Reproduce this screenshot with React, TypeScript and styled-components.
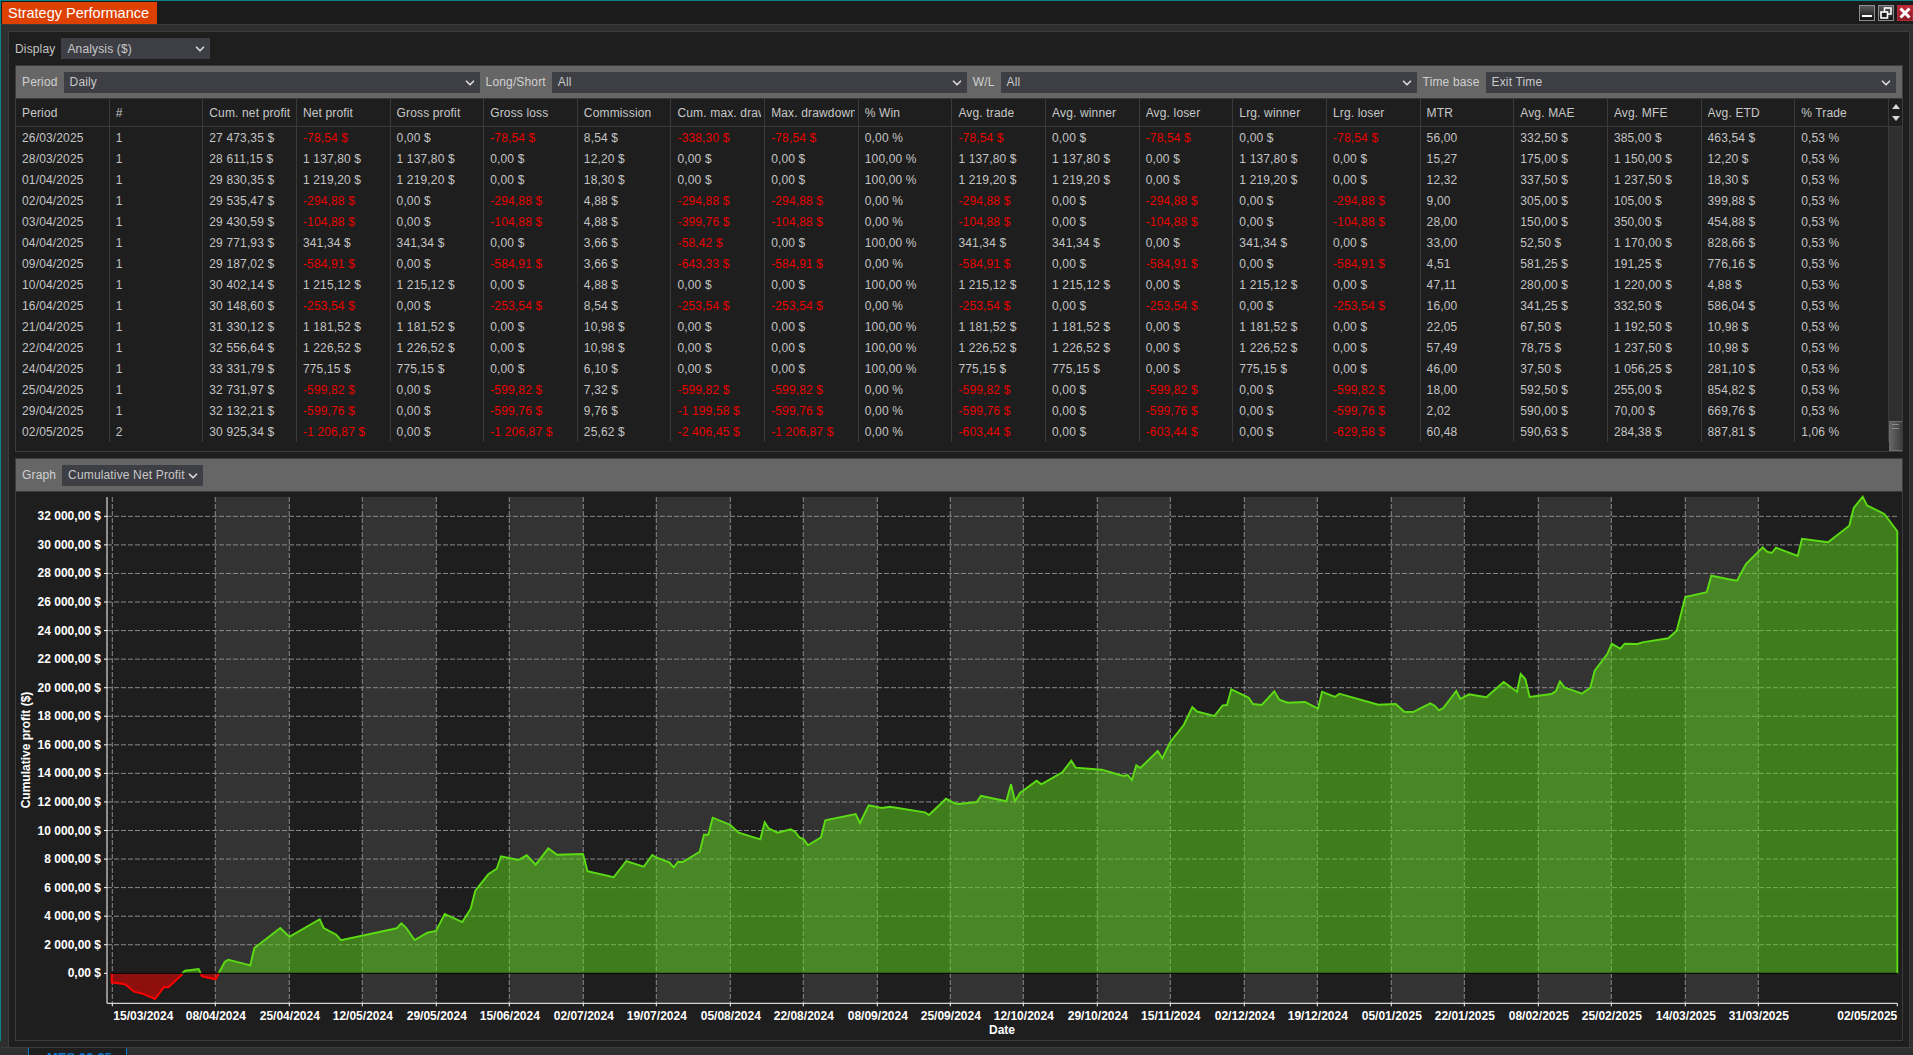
import React from 'react';
import styled, { createGlobalStyle } from 'styled-components';
import { ChevronDown } from 'lucide-react';

const COLUMNS = [
  'Period', '#', 'Cum. net profit', 'Net profit', 'Gross profit', 'Gross loss', 'Commission',
  'Cum. max. drawdown', 'Max. drawdown', '% Win', 'Avg. trade', 'Avg. winner', 'Avg. loser',
  'Lrg. winner', 'Lrg. loser', 'MTR', 'Avg. MAE', 'Avg. MFE', 'Avg. ETD', '% Trade',
];

// every value is kept as shown, a leading minus paints the cell red
const ROWS = [
  '26/03/2025|1|27 473,35 $|-78,54 $|0,00 $|-78,54 $|8,54 $|-338,30 $|-78,54 $|0,00 %|-78,54 $|0,00 $|-78,54 $|0,00 $|-78,54 $|56,00|332,50 $|385,00 $|463,54 $|0,53 %',
  '28/03/2025|1|28 611,15 $|1 137,80 $|1 137,80 $|0,00 $|12,20 $|0,00 $|0,00 $|100,00 %|1 137,80 $|1 137,80 $|0,00 $|1 137,80 $|0,00 $|15,27|175,00 $|1 150,00 $|12,20 $|0,53 %',
  '01/04/2025|1|29 830,35 $|1 219,20 $|1 219,20 $|0,00 $|18,30 $|0,00 $|0,00 $|100,00 %|1 219,20 $|1 219,20 $|0,00 $|1 219,20 $|0,00 $|12,32|337,50 $|1 237,50 $|18,30 $|0,53 %',
  '02/04/2025|1|29 535,47 $|-294,88 $|0,00 $|-294,88 $|4,88 $|-294,88 $|-294,88 $|0,00 %|-294,88 $|0,00 $|-294,88 $|0,00 $|-294,88 $|9,00|305,00 $|105,00 $|399,88 $|0,53 %',
  '03/04/2025|1|29 430,59 $|-104,88 $|0,00 $|-104,88 $|4,88 $|-399,76 $|-104,88 $|0,00 %|-104,88 $|0,00 $|-104,88 $|0,00 $|-104,88 $|28,00|150,00 $|350,00 $|454,88 $|0,53 %',
  '04/04/2025|1|29 771,93 $|341,34 $|341,34 $|0,00 $|3,66 $|-58,42 $|0,00 $|100,00 %|341,34 $|341,34 $|0,00 $|341,34 $|0,00 $|33,00|52,50 $|1 170,00 $|828,66 $|0,53 %',
  '09/04/2025|1|29 187,02 $|-584,91 $|0,00 $|-584,91 $|3,66 $|-643,33 $|-584,91 $|0,00 %|-584,91 $|0,00 $|-584,91 $|0,00 $|-584,91 $|4,51|581,25 $|191,25 $|776,16 $|0,53 %',
  '10/04/2025|1|30 402,14 $|1 215,12 $|1 215,12 $|0,00 $|4,88 $|0,00 $|0,00 $|100,00 %|1 215,12 $|1 215,12 $|0,00 $|1 215,12 $|0,00 $|47,11|280,00 $|1 220,00 $|4,88 $|0,53 %',
  '16/04/2025|1|30 148,60 $|-253,54 $|0,00 $|-253,54 $|8,54 $|-253,54 $|-253,54 $|0,00 %|-253,54 $|0,00 $|-253,54 $|0,00 $|-253,54 $|16,00|341,25 $|332,50 $|586,04 $|0,53 %',
  '21/04/2025|1|31 330,12 $|1 181,52 $|1 181,52 $|0,00 $|10,98 $|0,00 $|0,00 $|100,00 %|1 181,52 $|1 181,52 $|0,00 $|1 181,52 $|0,00 $|22,05|67,50 $|1 192,50 $|10,98 $|0,53 %',
  '22/04/2025|1|32 556,64 $|1 226,52 $|1 226,52 $|0,00 $|10,98 $|0,00 $|0,00 $|100,00 %|1 226,52 $|1 226,52 $|0,00 $|1 226,52 $|0,00 $|57,49|78,75 $|1 237,50 $|10,98 $|0,53 %',
  '24/04/2025|1|33 331,79 $|775,15 $|775,15 $|0,00 $|6,10 $|0,00 $|0,00 $|100,00 %|775,15 $|775,15 $|0,00 $|775,15 $|0,00 $|46,00|37,50 $|1 056,25 $|281,10 $|0,53 %',
  '25/04/2025|1|32 731,97 $|-599,82 $|0,00 $|-599,82 $|7,32 $|-599,82 $|-599,82 $|0,00 %|-599,82 $|0,00 $|-599,82 $|0,00 $|-599,82 $|18,00|592,50 $|255,00 $|854,82 $|0,53 %',
  '29/04/2025|1|32 132,21 $|-599,76 $|0,00 $|-599,76 $|9,76 $|-1 199,58 $|-599,76 $|0,00 %|-599,76 $|0,00 $|-599,76 $|0,00 $|-599,76 $|2,02|590,00 $|70,00 $|669,76 $|0,53 %',
  '02/05/2025|2|30 925,34 $|-1 206,87 $|0,00 $|-1 206,87 $|25,62 $|-2 406,45 $|-1 206,87 $|0,00 %|-603,44 $|0,00 $|-603,44 $|0,00 $|-629,58 $|60,48|590,63 $|284,38 $|887,81 $|1,06 %',
].map((sRow) => sRow.split('|'));

// chart geometry, in page pixels
const ZERO_Y = 973.3;
const STEP_Y = 28.56;
const AXIS_X = 107;
const TOP_Y = 497;
const BOTTOM_Y = 1003.3;
const RIGHT_X = 1897.3;

const GRID_X = [
  112.3, 215.3, 289.3, 362.3, 436.3, 509.3, 583.3, 656.3, 730.3, 803.3, 877.3, 950.3,
  1023.3, 1097.3, 1170.3, 1244.3, 1317.3, 1391.3, 1464.3, 1538.3, 1611.3, 1685.3, 1758.3,
];

const DATES = [
  '15/03/2024', '08/04/2024', '25/04/2024', '12/05/2024', '29/05/2024', '15/06/2024', '02/07/2024',
  '19/07/2024', '05/08/2024', '22/08/2024', '08/09/2024', '25/09/2024', '12/10/2024', '29/10/2024',
  '15/11/2024', '02/12/2024', '19/12/2024', '05/01/2025', '22/01/2025', '08/02/2025', '25/02/2025',
  '14/03/2025', '31/03/2025',
];

const LOSS_A = '111.7,973.3 111.7,982.3 125,984.3 134,991.7 142.7,993.7 155,999 164,987 168.3,987.3 181.7,975 182.3,973.3';
const LOSS_B = '200.7,973.3 202,976.3 215.7,979.3 218.7,973.3';
const GAIN_A = '182.3,973.3 185,970.7 198.7,969 200.7,973.3';
const GAIN_B = `218.7,973.3 224.7,962 228.3,959.7 250.3,965.3 254.3,948 259.3,944.3 280.3,928 289.3,936.7
  319.7,919.3 323.7,928 336.3,934.7 341,940.3 396.7,928.3 401.3,923.3 405.7,927.3 414.7,940 427.3,932.7
  436,931 444.7,914 462.3,922 470.7,908.7 475.3,890.7 488.3,874.3 496.7,868.7 501,856.3 518.3,860
  526.7,855.3 535.7,864.7 548.3,848.3 557,854.7 583,854 587.5,871.3 613.7,877.3 626.3,861 643.7,866.7
  652.3,855 656.7,857.7 669.3,862.3 673.7,867.3 678,861.7 682.7,862 699.7,851.7 704,834.7 708.3,834.7
  712.7,817.7 730,824.7 738.7,832.7 760.3,839.3 764.7,822.3 769,828.7 777.7,832.7 790.7,829.3 795,831.7
  799.3,837.3 803.7,839.3 808,845.3 821,837.3 825.3,820.3 855.7,814 860,823 868.7,805.3 881.7,808
  890,806.7 925,812.3 929,815 946,798.7 954.7,803.3 959,804 976.7,802 981,795.7 1006.3,801.3 1011,784.3
  1015,801.3 1020,793 1036.7,780.7 1041.3,784.3 1062.3,772.3 1071.3,760.7 1075.7,767.7 1101.7,769.7
  1123.3,776 1127.7,775 1132,780 1136.3,765.3 1140.3,768 1157.7,751 1162.3,758.3 1170.3,742 1183.7,725
  1192.3,707 1196.7,711.3 1214.3,716 1222.7,705.3 1227,705 1231.3,689.3 1248.7,697.7 1253,704 1261.7,705
  1274.3,691.3 1279.3,699.7 1287.7,702.7 1305,702 1318,708.7 1322,691.7 1335,697 1339.3,693.7 1378.3,704.7
  1395.7,704 1404.3,711.7 1413,712 1430.3,703.3 1434.7,705.7 1439,710.3 1443.3,708 1456.3,691 1460.3,699
  1469,694.3 1486.3,697.3 1503.7,682 1517,691.7 1520.7,674 1525.3,679 1529.7,697 1551.3,694 1555.7,691.3
  1560,681.3 1564.3,687.3 1581.7,693.7 1590.3,687.7 1594.7,670.7 1607.3,654 1611.7,643.7 1620.3,648.7
  1624.7,643.7 1637.7,644 1642.3,642.3 1668.3,638.3 1676.7,630.7 1685.3,597 1706.7,592.3 1711.3,575.7
  1728.7,579.3 1737,580.7 1746,564 1762.7,547.3 1767,551.7 1771.7,553 1776,547.7 1797.7,556 1802,538.7
  1828,542.3 1849.3,525.7 1853.7,508 1862.7,496.7 1867,505.3 1884.3,514 1897.3,531.3 1897.3,973.3`;

const formatAxis = (iValue: number): string =>
  iValue === 0 ? '0,00 $' : `${String(iValue).replace(/(\d)(?=\d{3}$)/, '$1 ')},00 $`;

const Select = ({ sValue, iWidth }: { sValue: string; iWidth: number }) => (
  <SelectBox $iWidth={iWidth}>
    <span>{sValue}</span>
    <ChevronDown size={14} strokeWidth={3} color='#d8d8d8' />
  </SelectBox>
);

const Chart = () => {
  const arTicksY = Array.from({ length: 17 }, (_, i) => i * 2000);
  const arBands = GRID_X.slice(1).filter((_, i) => i % 2 === 0);

  return (
    <ChartSvg viewBox='16 492 1886 548'>
      {arBands.map((x, i) => (
        <rect key={x} x={x} y={TOP_Y} width={GRID_X[i * 2 + 2] - x} height={BOTTOM_Y - TOP_Y} fill='#333333' />
      ))}

      {arTicksY.map((iValue) => {
        const y = ZERO_Y - (iValue / 2000) * STEP_Y;
        return (
          <g key={iValue}>
            {iValue > 0 && <GridLine x1={AXIS_X} x2={RIGHT_X} y1={y} y2={y} />}
            <AxisLine x1={AXIS_X - 3} x2={AXIS_X} y1={y} y2={y} />
            <AxisText x={101} y={y + 4} textAnchor='end'>
              {formatAxis(iValue)}
            </AxisText>
          </g>
        );
      })}

      {GRID_X.map((x, i) => (
        <g key={x}>
          <GridLine x1={x} x2={x} y1={TOP_Y} y2={BOTTOM_Y} />
          <AxisLine x1={x} x2={x} y1={BOTTOM_Y} y2={BOTTOM_Y + 3} />
          <AxisText x={i === 0 ? x + 1 : x + 0.5} y={1020} textAnchor={i === 0 ? 'start' : 'middle'}>
            {DATES[i]}
          </AxisText>
        </g>
      ))}

      <polygon points={LOSS_A} fill='rgba(255, 0, 0, 0.5)' />
      <polygon points={LOSS_B} fill='rgba(255, 0, 0, 0.5)' />
      <polygon points={GAIN_A} fill='rgba(96, 220, 26, 0.5)' />
      <polygon points={GAIN_B} fill='rgba(96, 220, 26, 0.5)' />

      <polyline points={LOSS_A} fill='none' stroke='#ff0000' strokeWidth={2} />
      <polyline points={LOSS_B} fill='none' stroke='#ff0000' strokeWidth={2} />
      <polyline points={GAIN_A} fill='none' stroke='#5cdc14' strokeWidth={1.9} />
      <polyline points={GAIN_B} fill='none' stroke='#5cdc14' strokeWidth={1.9} />

      <line x1={AXIS_X + 4} x2={RIGHT_X} y1={ZERO_Y} y2={ZERO_Y} stroke='#000000' />

      <AxisLine x1={AXIS_X} x2={AXIS_X} y1={TOP_Y} y2={BOTTOM_Y} />
      <AxisLine x1={AXIS_X} x2={RIGHT_X} y1={BOTTOM_Y} y2={BOTTOM_Y} />
      <AxisLine x1={RIGHT_X} x2={RIGHT_X} y1={BOTTOM_Y} y2={BOTTOM_Y + 3} />

      <AxisText x={RIGHT_X} y={1020} textAnchor='end'>
        02/05/2025
      </AxisText>
      <AxisText x={1002} y={1034} textAnchor='middle'>
        Date
      </AxisText>
      <AxisText x={30} y={750} textAnchor='middle' transform='rotate(-90 30 750)'>
        Cumulative profit ($)
      </AxisText>
    </ChartSvg>
  );
};

const App = () => (
  <Root>
    <GlobalStyle />
    <TitleBar>
      <TitleTab>Strategy Performance</TitleTab>
      <WindowButtons>
        <WindowButton>
          <svg width='14' height='14' viewBox='0 0 14 14'>
            <rect x='2' y='9' width='10' height='2' fill='#ffffff' />
          </svg>
        </WindowButton>
        <WindowButton>
          <svg width='14' height='14' viewBox='0 0 14 14' fill='none' stroke='#ffffff' strokeWidth='1.6'>
            <rect x='5.5' y='2' width='6.5' height='6' />
            <rect x='2' y='6' width='6.5' height='6' fill='#1c1c1c' />
          </svg>
        </WindowButton>
        <WindowButton $bClose>
          <svg width='14' height='14' viewBox='0 0 14 14' stroke='#ffffff' strokeWidth='3'>
            <path d='M2.5 2.5 L11.5 11.5 M11.5 2.5 L2.5 11.5' />
          </svg>
        </WindowButton>
      </WindowButtons>
    </TitleBar>

    <Workspace>
      <MainPanel>
        <DisplayRow>
          <Label>Display</Label>
          <Select sValue='Analysis ($)' iWidth={149} />
        </DisplayRow>

        <TablePanel>
          <Toolbar>
            <Label>Period</Label>
            <Select sValue='Daily' iWidth={416} />
            <Label>Long/Short</Label>
            <Select sValue='All' iWidth={415} />
            <Label>W/L</Label>
            <Select sValue='All' iWidth={416} />
            <Label>Time base</Label>
            <Select sValue='Exit Time' iWidth={410} />
          </Toolbar>

          <TableArea>
            <Table>
              <thead>
                <tr>
                  {COLUMNS.map((sColumn) => (
                    <HeadCell key={sColumn}>
                      <HeadText>{sColumn}</HeadText>
                    </HeadCell>
                  ))}
                </tr>
              </thead>
              <tbody>
                {ROWS.map((arRow) => (
                  <tr key={arRow[0]}>
                    {arRow.map((sCell, i) => (
                      <Cell key={i} $bNegative={sCell.startsWith('-')}>
                        {sCell}
                      </Cell>
                    ))}
                  </tr>
                ))}
              </tbody>
            </Table>

            <Scrollbar>
              <ScrollButtons>
                <ArrowUp />
                <ArrowDown />
              </ScrollButtons>
              <ScrollTrack>
                <ScrollThumb>
                  <ThumbGrip />
                </ScrollThumb>
              </ScrollTrack>
            </Scrollbar>
          </TableArea>
        </TablePanel>

        <GraphPanel>
          <Toolbar>
            <Label>Graph</Label>
            <Select sValue='Cumulative Net Profit' iWidth={141} />
          </Toolbar>
          <Chart />
        </GraphPanel>
      </MainPanel>
    </Workspace>

    <BottomTabs>
      <BottomTab>MES 06-25</BottomTab>
    </BottomTabs>
  </Root>
);

const GlobalStyle = createGlobalStyle`
  html, body {
    margin: 0;
    padding: 0;
    background: #2f2f2f;
  }

  * {
    box-sizing: border-box;
  }
`;

const Root = styled.div`
  width: 1913px;
  height: 1055px;
  display: flex;
  flex-direction: column;
  overflow: hidden;
  padding-left: 1px;
  border-top: 1px solid #0a8484;
  background: linear-gradient(#0a8484 0 1040px, #2f2f2f 0) left top / 1px 100% no-repeat #2f2f2f;
  font-family: 'Liberation Sans', Arial, sans-serif;
  font-size: 12px;
  color: #c8c8c8;
`;

const TitleBar = styled.header`
  height: 24px;
  flex-shrink: 0;
  display: flex;
  justify-content: space-between;
  background: #1c1c1c;
  border-bottom: 1px solid #3a3a3a;
`;

const TitleTab = styled.div`
  width: 155px;
  height: 22px;
  margin: 1px 0 0 1px;
  padding-left: 6px;
  background: #de4000;
  color: #ffffff;
  font-size: 14.5px;
  line-height: 22px;
  white-space: nowrap;
`;

const WindowButtons = styled.div`
  display: flex;
  gap: 3px;
  padding-top: 4px;
`;

const WindowButton = styled.div<{ $bClose?: boolean }>`
  width: 16px;
  height: 16px;
  display: flex;
  align-items: center;
  justify-content: center;
  border: 1px solid ${(props) => (props.$bClose ? '#b02a38' : '#8c8c8c')};
  background: ${(props) =>
    props.$bClose
      ? 'linear-gradient(#c02838, #8c1c28)'
      : 'linear-gradient(#5a5a5a, #111111)'};
`;

const Workspace = styled.main`
  flex: 1;
  min-height: 0;
  display: flex;
  padding: 6px 3px 0 7px;
`;

const MainPanel = styled.section`
  flex: 1;
  min-width: 0;
  display: flex;
  flex-direction: column;
  gap: 6px;
  padding: 6px 6px 6px;
  background: #1e1e1e;
  border: 1px solid #3c3c3c;
  border-bottom: none;
`;

const DisplayRow = styled.div`
  display: flex;
  align-items: center;
  gap: 6px;
`;

const Label = styled.span`
  white-space: nowrap;
  letter-spacing: 0.15px;
  color: #c4c4c4;
`;

const SelectBox = styled.div<{ $iWidth: number }>`
  flex: 0 0 ${(props) => props.$iWidth}px;
  height: 21px;
  min-width: 0;
  display: flex;
  align-items: center;
  justify-content: space-between;
  padding: 0 3px 0 6px;
  background: #3e3e45;
  color: #c8c8c8;
  letter-spacing: 0.15px;
  white-space: nowrap;
`;

const TablePanel = styled.section`
  height: 387px;
  flex-shrink: 0;
  display: flex;
  flex-direction: column;
  border: 1px solid #3c3c3c;
`;

const Toolbar = styled.div`
  height: 33px;
  flex-shrink: 0;
  display: flex;
  align-items: flex-start;
  gap: 6px;
  padding: 6px 6px 0;
  background: #666666;
  border-bottom: 1px solid #3a3a3a;
  line-height: 21px;

  ${Label} {
    color: #d0d0d0;
  }
`;

const TableArea = styled.div`
  flex: 1;
  min-height: 0;
  display: flex;
`;

const Table = styled.table`
  width: 1873px;
  height: fit-content;
  flex-shrink: 0;
  table-layout: fixed;
  border-collapse: separate;
  border-spacing: 0;
`;

const HeadCell = styled.th`
  height: 28px;
  padding: 0 3px 0 6px;
  text-align: left;
  font-weight: 400;
  letter-spacing: 0.15px;
  color: #c8c8c8;
  border-right: 1px solid #3a3a3a;
  border-bottom: 1px solid #3a3a3a;
`;

const HeadText = styled.span`
  display: block;
  overflow: hidden;
  white-space: nowrap;
`;

const Cell = styled.td<{ $bNegative?: boolean }>`
  height: 21px;
  padding: 0 0 0 6px;
  overflow: hidden;
  white-space: nowrap;
  letter-spacing: 0.15px;
  color: ${(props) => (props.$bNegative ? '#e80000' : '#c4c4c4')};
  border-right: 1px solid #3a3a3a;
`;

const Scrollbar = styled.div`
  flex: 1;
  display: flex;
  flex-direction: column;
`;

const ScrollButtons = styled.div`
  height: 28px;
  flex-shrink: 0;
  display: flex;
  flex-direction: column;
  align-items: center;
  justify-content: center;
  gap: 7px;
  border-bottom: 1px solid #3a3a3a;
`;

const ArrowUp = styled.div`
  width: 0;
  height: 0;
  border-left: 4px solid transparent;
  border-right: 4px solid transparent;
  border-bottom: 5px solid #d8d8d8;
`;

const ArrowDown = styled.div`
  width: 0;
  height: 0;
  border-left: 4px solid transparent;
  border-right: 4px solid transparent;
  border-top: 5px solid #d8d8d8;
`;

const ScrollTrack = styled.div`
  flex: 1;
  display: flex;
  flex-direction: column;
  justify-content: flex-end;
  background: #2f2f2f;
`;

const ScrollThumb = styled.div`
  height: 30px;
  padding-top: 2px;
  background: linear-gradient(90deg, #6a6a6a, #3c3c3c);
  border-top: 1px solid #707070;
  border-bottom: 1px solid #707070;
`;

const ThumbGrip = styled.div`
  width: 7px;
  height: 5px;
  margin: 0 auto;
  border-top: 1px solid #8a8a8a;
  border-bottom: 1px solid #8a8a8a;
`;

const GraphPanel = styled.section`
  flex: 1;
  min-height: 0;
  display: flex;
  flex-direction: column;
  border: 1px solid #3c3c3c;
`;

const ChartSvg = styled.svg`
  display: block;
  flex-shrink: 0;
  width: 1886px;
  height: 548px;
`;

const GridLine = styled.line`
  stroke: #8a8a8a;
  stroke-width: 1;
  stroke-dasharray: 5 2;
`;

const AxisLine = styled.line`
  stroke: #ffffff;
  stroke-width: 1;
`;

const AxisText = styled.text`
  font-family: 'Liberation Sans', Arial, sans-serif;
  font-size: 12px;
  font-weight: 700;
  fill: #ffffff;
`;

const BottomTabs = styled.footer`
  height: 8px;
  flex-shrink: 0;
  display: flex;
  padding-left: 27px;
  overflow: hidden;
  background: #2f2f2f;
  border-top: 1px solid #3c3c3c;
`;

const BottomTab = styled.div`
  width: 99px;
  height: 24px;
  padding: 2px 0 0 18px;
  background: #1e1e1e;
  border-left: 1px solid #0a78d0;
  border-right: 1px solid #0a78d0;
  color: #0a78d0;
  font-size: 13px;
  font-weight: 700;
  white-space: nowrap;
`;

export default App;
